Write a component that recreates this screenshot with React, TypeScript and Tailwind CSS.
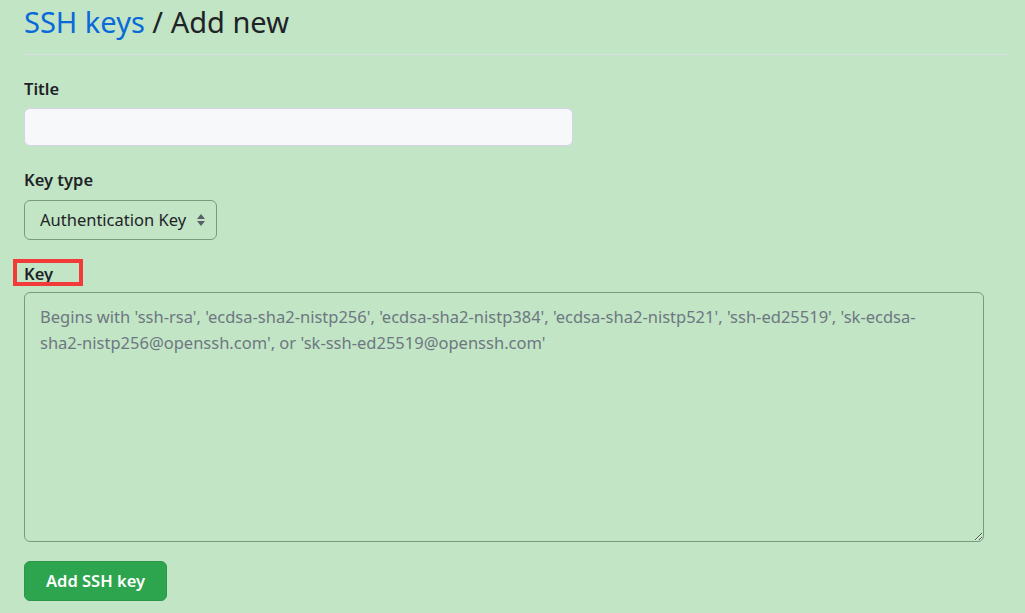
import React from "react";

const App = () => {
  return (
    <div className="min-h-[613px] w-full bg-[#c1e5c5] text-[#1f2328] font-['Noto_Sans','Open_Sans',sans-serif]">
      <div className="pl-6 pr-[15px]">
        <div className="border-b border-[#d8dee4] pt-[2px] pb-[12px]">
          <h1 className="text-[29px] leading-[40px] font-normal">
            <a className="text-[#0969da]" href="#">SSH keys</a>
            <span> / Add new</span>
          </h1>
        </div>

        <form className="pt-[22px] text-[16.5px]">
          <label className="block leading-[24px] font-semibold">Title</label>
          <input
            type="text"
            className="mt-[7px] block h-[38px] w-[549px] rounded-[6px] border border-[#d6d2ea] bg-[#f6f8fa] px-3"
          />

          <label className="mt-[22px] block leading-[24px] font-semibold">Key type</label>
          <div className="relative mt-[8px] w-[193px]">
            <select className="block h-[40px] w-full appearance-none rounded-[6px] border border-[#7a9a80] bg-transparent pl-[15px] pr-[4px] text-[#1f2328]">
              <option>Authentication Key</option>
            </select>
            <svg
              className="pointer-events-none absolute right-[11px] top-[13px]"
              width="10"
              height="14"
              viewBox="0 0 10 14"
            >
              <path d="M5 1 L9 6 L1 6 Z" fill="#57606a" />
              <path d="M5 13 L9 8 L1 8 Z" fill="#57606a" />
            </svg>
          </div>

          <div className="relative mt-[22px]">
            <label className="block leading-[24px] font-semibold">Key</label>
            <div className="absolute left-[-11px] top-[-3px] h-[27px] w-[70px] border-4 border-[#f23a3a]"></div>
          </div>
          <textarea
            className="mt-[6px] block h-[250px] w-[960px] rounded-[6px] border border-[#7a9a80] bg-transparent pl-[15px] pr-[40px] py-[11px] leading-[26px] placeholder:text-[#6e7781]"
            placeholder="Begins with 'ssh-rsa', 'ecdsa-sha2-nistp256', 'ecdsa-sha2-nistp384', 'ecdsa-sha2-nistp521', 'ssh-ed25519', 'sk-ecdsa-sha2-nistp256@openssh.com', or 'sk-ssh-ed25519@openssh.com'"
          />

          <button
            type="button"
            className="mt-[19px] h-[40px] w-[143px] rounded-[6px] border border-[#2c974b] bg-[#2da44e] font-semibold text-white"
          >
            Add SSH key
          </button>
        </form>
      </div>
    </div>
  );
};

export default App;
